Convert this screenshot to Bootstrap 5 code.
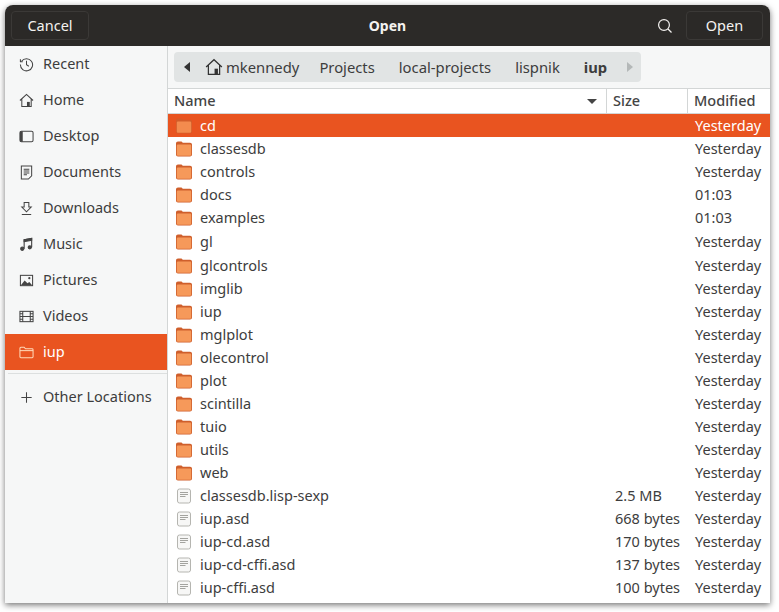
<!DOCTYPE html>
<html lang="en">
<head>
    <meta charset="UTF-8">
    <meta name="viewport" content="width=device-width, initial-scale=1.0">
    <title>Open</title>
    <link href="https://cdn.jsdelivr.net/npm/bootstrap@5.3.0/dist/css/bootstrap.min.css" rel="stylesheet">
    <style>
        html, body { height: 100%; }
        body { background: #fff; font-family: "Noto Sans", sans-serif; font-size: 14.5px; color: #3d3d3d; overflow: hidden; padding: 5px 9px 9px 5px; }
        .dlg-window { height: 598px; border-radius: 8px 8px 0 0; overflow: hidden; box-shadow: 0 2px 6px rgba(0,0,0,.55); background: #fff; }
        .dlg-head { height: 41px; background: #2c2a28; color: #f4f2f0; padding: 5px 7px 5px 6px; flex: none; }
        .dlg-btn { height: 29px; border: 1px solid #3b3937; border-radius: 4px; background: #2b2927; color: #f4f2f0; font-size: 14.5px; line-height: 1; padding: 0; }
        .dlg-cancel { width: 78px; }
        .dlg-open { width: 77px; margin-left: 13px; }
        .dlg-title { font-weight: 700; font-size: 14px; left: 0; right: 0; top: 0; bottom: 0; pointer-events: none; }
        .side-pane { width: 163px; background: #f6f7f7; border-right: 1px solid #d3d6d6; flex: none; }
        .side-item { height: 36px; padding-left: 14px; gap: 9px; color: #3d3d3d; }
        .side-item svg { width: 15px; height: 15px; flex: none; }
        .side-active { background: #e95420; color: #fff; }
        .side-sep { border-top: 1px solid #dcdfdf; margin: 3px 0 5px 3px; }
        .main-pane { min-width: 0; }
        .path-wrap { height: 43px; padding: 6px 0 0 6px; background: #f6f7f7; border-bottom: 1px solid #d3d6d6; flex: none; }
        .path-bar { width: 467px; height: 30px; background: #e1e4e4; border-radius: 4px; font-size: 14.8px; }
        .path-arrow { width: 25px; }
        .path-home { width: 18px; height: 18px; margin: 0 3px 0 6px; }
        .path-seg { padding-right: 24px; }
        .path-first { padding-right: 20px; }
        .col-hd { height: 25px; border-bottom: 1px solid #d3d6d6; font-weight: 500; color: #444; flex: none; }
        .name-cell { width: 439px; flex: none; }
        .size-cell { width: 81px; flex: none; }
        .hd-cell { height: 100%; }
        .hd-name { padding: 0 9px 0 6px; border-right: 1px solid #d3d6d6; }
        .hd-size { padding-left: 6px; border-right: 1px solid #d3d6d6; }
        .hd-mod { padding-left: 6px; }
        .file-row { height: 23px; }
        .file-row.tall { height: 24px; }
        .file-row .name-cell { padding-left: 8px; gap: 8px; }
        .file-row .size-cell { padding-left: 8px; }
        .file-row .mod-cell { padding-left: 7px; white-space: nowrap; }
        .file-row.picked { background: #e95420; color: #fff; }
        .file-row.picked .ico { opacity: .8; }
        .ico { width: 16px; height: 16px; flex: none; }
        .sort-tri { width: 0; height: 0; border-left: 5px solid transparent; border-right: 5px solid transparent; border-top: 5px solid #444; }
    </style>
</head>
<body>
    <svg width="0" height="0" class="position-absolute">
        <symbol id="i-folder" viewBox="0 0 16 16">
            <path d="M0 2.500C0 1.300.8.500 2 .500h3.500l1.300 1.300H14c1.200 0 2 .8 2 2v9.700c0 1.200-.8 2-2 2H2c-1.200 0-2-.8-2-2z" fill="#cf5f2c"/>
            <path d="M.8 4.800c0-.8.6-1.300 1.400-1.300h11.600c.8 0 1.400.5 1.400 1.300v8.600c0 .8-.6 1.300-1.400 1.300H2.200c-.8 0-1.400-.5-1.400-1.300z" fill="#f6995a"/>
        </symbol>
        <symbol id="i-file" viewBox="0 0 16 16">
            <rect x="1.500" y="1" width="13" height="14" rx="2" fill="#f7f7f6" stroke="#b5b5b0"/>
            <path d="M4 4.500h8M4 6.500h8M4 8.500h5.500" stroke="#a3a39f" fill="none"/>
        </symbol>
    </svg>

    <div class="dlg-window d-flex flex-column">
        <div class="dlg-head d-flex align-items-center position-relative">
            <button class="dlg-btn dlg-cancel" type="button">Cancel</button>
            <div class="dlg-title position-absolute d-flex align-items-center justify-content-center">Open</div>
            <svg class="ms-auto" width="16" height="16" viewBox="0 0 16 16" fill="none" stroke="#f4f2f0" stroke-width="1.200"><circle cx="7" cy="7" r="5.400"/><path d="M11 11l3.500 3.500"/></svg>
            <button class="dlg-btn dlg-open" type="button">Open</button>
        </div>
        <div class="d-flex flex-grow-1 overflow-hidden">
            <div class="side-pane">
                <div class="side-item d-flex align-items-center">
                    <svg viewBox="0 0 16 16" fill="none" stroke="#444" stroke-width="1.100"><path d="M2.700 4.500A6.500 6.500 0 1 1 1.500 8"/><path d="M1.500 2.500v2.500h2.500M8 4v4.300l2.500 1.500"/></svg>Recent
                </div>
                <div class="side-item d-flex align-items-center">
                    <svg viewBox="0 0 16 16" fill="none" stroke="#444" stroke-width="1.100"><path d="M1 8l7-6.500L15 8M3 6.500v8h10v-8"/><rect x="8.500" y="9.500" width="3" height="5" fill="#444" stroke="none"/></svg>Home
                </div>
                <div class="side-item d-flex align-items-center">
                    <svg viewBox="0 0 16 16" fill="none" stroke="#444" stroke-width="1.100"><rect x="1" y="2.500" width="14" height="11" rx="1.500"/><path d="M1 4a1.500 1.500 0 0 1 1.500-1.500H4v11H2.500A1.500 1.500 0 0 1 1 12z" fill="#444" stroke="none"/></svg>Desktop
                </div>
                <div class="side-item d-flex align-items-center">
                    <svg viewBox="0 0 16 16" fill="none" stroke="#444" stroke-width="1.100"><path d="M2.500 1h11v10.500L10 15H2.500z"/><path d="M5 4.500h6M5 6.500h6M5 8.500h6M5 10.500h3.500"/></svg>Documents
                </div>
                <div class="side-item d-flex align-items-center">
                    <svg viewBox="0 0 16 16" fill="none" stroke="#444" stroke-width="1.100"><path d="M5.500 1.500h5v5h2.500L8 11.500 3 6.500h2.500z"/><path d="M3 14.500h10"/></svg>Downloads
                </div>
                <div class="side-item d-flex align-items-center">
                    <svg viewBox="0 0 16 16" fill="#444" stroke="#444" stroke-width="1.200"><path d="M5.500 12.500V3l8-1.500V11" fill="none"/><path d="M5.500 3l8-1.500v2l-8 1.500z"/><circle cx="3.500" cy="12.500" r="1.700"/><circle cx="11.500" cy="11" r="1.700"/></svg>Music
                </div>
                <div class="side-item d-flex align-items-center">
                    <svg viewBox="0 0 16 16" fill="none" stroke="#444" stroke-width="1.100"><rect x="1.500" y="2.500" width="13" height="11"/><path d="M2 13l4-5 3 3 2-1.500 3 3.500z" fill="#444" stroke="none"/><circle cx="11" cy="5.500" r="1.200" fill="#444" stroke="none"/></svg>Pictures
                </div>
                <div class="side-item d-flex align-items-center">
                    <svg viewBox="0 0 16 16" fill="none" stroke="#444" stroke-width="1.100"><rect x="1" y="2.500" width="14" height="11"/><path d="M4 2.500v11M12 2.500v11M4 8h8M1 5h3M1 8h3M1 11h3M12 5h3M12 8h3M12 11h3"/></svg>Videos
                </div>
                <div class="side-item side-active d-flex align-items-center">
                    <svg viewBox="0 0 16 16" fill="none" stroke="#ffd9b8" stroke-width="1.100"><path d="M1 3.500a1 1 0 0 1 1-1h3.500L7 4h7a1 1 0 0 1 1 1v7.500a1 1 0 0 1-1 1H2a1 1 0 0 1-1-1z"/><path d="M1 6h14"/></svg>iup
                </div>
                <div class="side-sep"></div>
                <div class="side-item d-flex align-items-center">
                    <svg viewBox="0 0 16 16" fill="none" stroke="#444" stroke-width="1.100"><path d="M8 2.500v11M2.500 8h11"/></svg>Other Locations
                </div>
            </div>
            <div class="main-pane flex-grow-1 d-flex flex-column">
                <div class="path-wrap">
                    <div class="path-bar d-flex align-items-center">
                        <div class="path-arrow d-flex justify-content-center"><svg width="6" height="10" viewBox="0 0 6 10"><path d="M6 0v10L0 5z" fill="#333"/></svg></div>
                        <svg class="path-home" viewBox="0 0 16 16" fill="none" stroke="#333" stroke-width="1.100"><path d="M1 8l7-6.500L15 8M3 6.500v8h10v-8"/><rect x="8.500" y="9.500" width="3" height="5" fill="#333" stroke="none"/></svg>
                        <span class="path-first">mkennedy</span>
                        <span class="path-seg">Projects</span>
                        <span class="path-seg">local-projects</span>
                        <span class="path-seg">lispnik</span>
                        <span class="fw-bold">iup</span>
                        <svg class="ms-auto me-2" width="6" height="10" viewBox="0 0 6 10"><path d="M0 0v10l6-5z" fill="#b4b8b8"/></svg>
                    </div>
                </div>
                <div class="col-hd d-flex align-items-center">
                    <div class="name-cell hd-cell hd-name d-flex align-items-center justify-content-between"><span>Name</span><span class="sort-tri"></span></div>
                    <div class="size-cell hd-cell hd-size d-flex align-items-center">Size</div>
                    <div class="hd-cell hd-mod d-flex align-items-center">Modified</div>
                </div>
                <div class="flex-grow-1 overflow-hidden">
                    <div class="file-row picked d-flex align-items-center"><div class="name-cell d-flex align-items-center"><svg class="ico"><use href="#i-folder"/></svg>cd</div><div class="size-cell"></div><div class="mod-cell">Yesterday</div></div>
                    <div class="file-row d-flex align-items-center"><div class="name-cell d-flex align-items-center"><svg class="ico"><use href="#i-folder"/></svg>classesdb</div><div class="size-cell"></div><div class="mod-cell">Yesterday</div></div>
                    <div class="file-row d-flex align-items-center"><div class="name-cell d-flex align-items-center"><svg class="ico"><use href="#i-folder"/></svg>controls</div><div class="size-cell"></div><div class="mod-cell">Yesterday</div></div>
                    <div class="file-row d-flex align-items-center"><div class="name-cell d-flex align-items-center"><svg class="ico"><use href="#i-folder"/></svg>docs</div><div class="size-cell"></div><div class="mod-cell">01:03</div></div>
                    <div class="file-row tall d-flex align-items-center"><div class="name-cell d-flex align-items-center"><svg class="ico"><use href="#i-folder"/></svg>examples</div><div class="size-cell"></div><div class="mod-cell">01:03</div></div>
                    <div class="file-row tall d-flex align-items-center"><div class="name-cell d-flex align-items-center"><svg class="ico"><use href="#i-folder"/></svg>gl</div><div class="size-cell"></div><div class="mod-cell">Yesterday</div></div>
                    <div class="file-row d-flex align-items-center"><div class="name-cell d-flex align-items-center"><svg class="ico"><use href="#i-folder"/></svg>glcontrols</div><div class="size-cell"></div><div class="mod-cell">Yesterday</div></div>
                    <div class="file-row d-flex align-items-center"><div class="name-cell d-flex align-items-center"><svg class="ico"><use href="#i-folder"/></svg>imglib</div><div class="size-cell"></div><div class="mod-cell">Yesterday</div></div>
                    <div class="file-row d-flex align-items-center"><div class="name-cell d-flex align-items-center"><svg class="ico"><use href="#i-folder"/></svg>iup</div><div class="size-cell"></div><div class="mod-cell">Yesterday</div></div>
                    <div class="file-row d-flex align-items-center"><div class="name-cell d-flex align-items-center"><svg class="ico"><use href="#i-folder"/></svg>mglplot</div><div class="size-cell"></div><div class="mod-cell">Yesterday</div></div>
                    <div class="file-row d-flex align-items-center"><div class="name-cell d-flex align-items-center"><svg class="ico"><use href="#i-folder"/></svg>olecontrol</div><div class="size-cell"></div><div class="mod-cell">Yesterday</div></div>
                    <div class="file-row d-flex align-items-center"><div class="name-cell d-flex align-items-center"><svg class="ico"><use href="#i-folder"/></svg>plot</div><div class="size-cell"></div><div class="mod-cell">Yesterday</div></div>
                    <div class="file-row d-flex align-items-center"><div class="name-cell d-flex align-items-center"><svg class="ico"><use href="#i-folder"/></svg>scintilla</div><div class="size-cell"></div><div class="mod-cell">Yesterday</div></div>
                    <div class="file-row d-flex align-items-center"><div class="name-cell d-flex align-items-center"><svg class="ico"><use href="#i-folder"/></svg>tuio</div><div class="size-cell"></div><div class="mod-cell">Yesterday</div></div>
                    <div class="file-row d-flex align-items-center"><div class="name-cell d-flex align-items-center"><svg class="ico"><use href="#i-folder"/></svg>utils</div><div class="size-cell"></div><div class="mod-cell">Yesterday</div></div>
                    <div class="file-row d-flex align-items-center"><div class="name-cell d-flex align-items-center"><svg class="ico"><use href="#i-folder"/></svg>web</div><div class="size-cell"></div><div class="mod-cell">Yesterday</div></div>
                    <div class="file-row d-flex align-items-center"><div class="name-cell d-flex align-items-center"><svg class="ico"><use href="#i-file"/></svg>classesdb.lisp-sexp</div><div class="size-cell">2.5 MB</div><div class="mod-cell">Yesterday</div></div>
                    <div class="file-row d-flex align-items-center"><div class="name-cell d-flex align-items-center"><svg class="ico"><use href="#i-file"/></svg>iup.asd</div><div class="size-cell">668 bytes</div><div class="mod-cell">Yesterday</div></div>
                    <div class="file-row d-flex align-items-center"><div class="name-cell d-flex align-items-center"><svg class="ico"><use href="#i-file"/></svg>iup-cd.asd</div><div class="size-cell">170 bytes</div><div class="mod-cell">Yesterday</div></div>
                    <div class="file-row d-flex align-items-center"><div class="name-cell d-flex align-items-center"><svg class="ico"><use href="#i-file"/></svg>iup-cd-cffi.asd</div><div class="size-cell">137 bytes</div><div class="mod-cell">Yesterday</div></div>
                    <div class="file-row d-flex align-items-center"><div class="name-cell d-flex align-items-center"><svg class="ico"><use href="#i-file"/></svg>iup-cffi.asd</div><div class="size-cell">100 bytes</div><div class="mod-cell">Yesterday</div></div>
                </div>
            </div>
        </div>
    </div>
    <script src="https://cdn.jsdelivr.net/npm/bootstrap@5.3.0/dist/js/bootstrap.bundle.min.js"></script>
</body>
</html>
